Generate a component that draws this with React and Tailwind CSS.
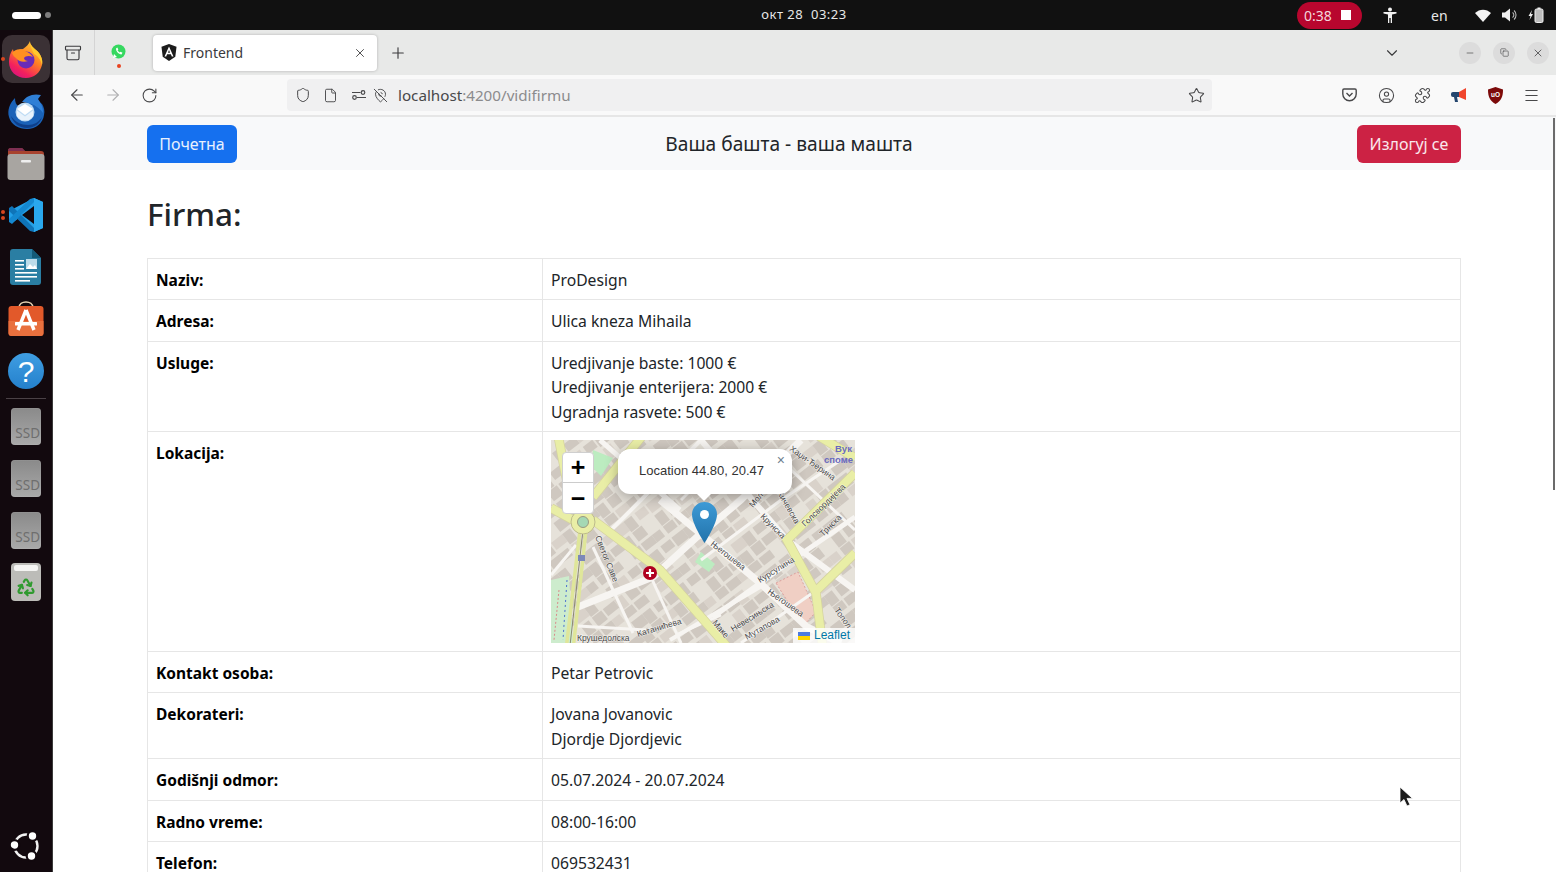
import { ArrowLeft, ArrowRight, RotateCw, Shield, File, Star, Plus, Minus, X, ChevronDown, Menu, Puzzle, CircleUser, MapPinOff, Archive, Copy, Recycle } from 'lucide-react'

const Firefox = () => (
    <svg width="36" height="37" viewBox="0 0 36 37">
        <defs>
            <linearGradient id="ffa" x1="0.85" y1="0" x2="0.25" y2="1">
                <stop offset="0" stopColor="#ffd83a" />
                <stop offset="0.45" stopColor="#ff7f24" />
                <stop offset="0.8" stopColor="#f3205e" />
                <stop offset="1" stopColor="#d8157e" />
            </linearGradient>
        </defs>
        <path d="M22 0c0 4 3 6 6 9 5 4 7 10 6 15-2 8-8 13-16 13C8 37 1 30 1 21c0-5 1-9 4-13 0 2 1 3 2 4 2-3 5-4 8-4 3-2 6-5 7-8z" fill="url(#ffa)" />
        <path d="M22 0c0 4 3 6 6 9 5 4 7 10 6 15-1-5-4-9-8-11-2-4-4-8-4-13z" fill="#ffc92e" />
        <circle cx="18" cy="19" r="8.500" fill="#6a2bb8" />
        <path d="M4 12c3-4 9-5 13-2 3 1 6 3 8 6-4-2-8-1-9 1 0 2 2 3 4 3-5 2-10 0-12-3-2-1-3-3-4-5z" fill="#ff8f22" />
    </svg>
)

const Thunderbird = () => (
    <svg width="38" height="38" viewBox="0 0 38 38">
        <path d="M8 6c-5 5-8 12-6 19 2 8 10 12 18 12 9 0 16-6 17-14 1-4 0-8-2-11l-4-3c-6-1-14 1-19 6-3-2-4-5-4-9z" fill="#1a62b8" />
        <path d="M15 10c4-6 11-9 19-7l-3 4 2 3c2 3 3 7 3 11-4-6-12-11-21-11z" fill="#2f7fd6" />
        <path d="M4 24c4 6 10 9 17 9 6 0 11-3 14-8-2 7-8 11-15 11-8 0-14-5-16-12z" fill="#0e3f8a" />
        <circle cx="18" cy="20" r="9.500" fill="#bfdcf4" />
        <path d="M10 17l8-5 8 5-8 6z" fill="#ffffff" />
        <path d="M10 18.500l8 6 8-6v6l-4 3.500h-8l-4-3.500z" fill="#e8f2fb" />
    </svg>
)

const Folder = () => (
    <svg width="38" height="36" viewBox="0 0 38 36">
        <path d="M1 6a3 3 0 013-3h11l3 3h16a3 3 0 013 3v10H1z" fill="#a8432f" />
        <path d="M1 6a3 3 0 013-3h11l3 3H1z" fill="#7e2f52" />
        <rect x="0.500" y="9" width="37" height="26" rx="3" fill="#a8a5a1" />
        <rect x="14" y="15" width="10" height="2.500" rx="1" fill="#efefef" />
    </svg>
)

const VSCode = () => (
    <svg width="36" height="36" viewBox="0 0 36 36">
        <path d="M26 1l9 4v26l-9 4-15-14-7 5-3-2v-10z" fill="#23a0e8" />
        <path d="M1 11l3-2 22 22v4l-4-1L1 14z" fill="#0f74b8" />
        <path d="M26 9v18L14 18z" fill="#12090e" />
        <path d="M1 25l3 2 22-22V1l-4 1L1 22z" fill="#1488d0" />
        <path d="M26 1l9 4v26l-9 4z" fill="#2aa8ee" />
    </svg>
)

const Writer = () => (
    <svg width="32" height="38" viewBox="0 0 32 38">
        <path d="M3 1h19l9 9v24a3 3 0 01-3 3H3a3 3 0 01-3-3V4a3 3 0 013-3z" fill="#2a7ea3" />
        <path d="M22 1l9 9h-9z" fill="#135a78" />
        <rect x="5" y="12" width="9" height="1.600" fill="#fff" />
        <rect x="5" y="16" width="9" height="1.600" fill="#fff" />
        <rect x="5" y="20" width="9" height="1.600" fill="#fff" />
        <rect x="16" y="11" width="11" height="10" fill="#bcdcea" />
        <path d="M16 21l4-5 3 3 2-2 2 4z" fill="#fff" />
        <rect x="5" y="24" width="22" height="1.600" fill="#fff" />
        <rect x="5" y="28" width="22" height="1.600" fill="#fff" />
        <rect x="5" y="32" width="15" height="1.600" fill="#fff" />
    </svg>
)

const AppCenter = () => (
    <svg width="36" height="36" viewBox="0 0 36 36">
        <path d="M11 7c0-8 14-8 14 0" fill="none" stroke="#e6d4b4" strokeWidth="1.600" />
        <rect x="0.500" y="5" width="35" height="30" rx="3" fill="#e2592a" />
        <path d="M0.500 20h35v12a3 3 0 01-3 3h-29a3 3 0 01-3-3z" fill="#e9703e" />
        <path d="M18 9L10 29M18 9l8 20" stroke="#fff" strokeWidth="3.400" fill="none" />
        <rect x="7" y="21" width="22" height="3.400" rx="0.500" fill="#fff" />
    </svg>
)

const Ssd = () => (
    <div className="relative w-[30px] h-[37px] rounded-[4px] bg-gradient-to-b from-[#8a8a8a] to-[#a9a9a9] shadow-[inset_0_0_1px_rgba(255,255,255,0.5)]">
        <span className="absolute right-[1px] bottom-[4px] text-[13.500px] leading-none text-[#6e6e6e] font-['Noto_Sans',sans-serif]">SSD</span>
    </div>
)

const Trash = () => (
    <div className="relative w-[30px] h-[38px] rounded-[4px] bg-[#bcbcb8] flex items-end justify-center pb-[4px]">
        <div className="absolute left-[3px] right-[3px] top-[2px] h-[6px] bg-[#f4f4f2] rounded-[2px]" />
        <Recycle size={20} strokeWidth={2.600} className="text-[#2f9a2f]" />
    </div>
)

const UbuntuLogo = () => (
    <svg width="32" height="32" viewBox="0 0 32 32">
        <circle cx="16" cy="16" r="11.500" fill="none" stroke="#f2f2f2" strokeWidth="2.400" />
        <g fill="#fff" stroke="#12090e" strokeWidth="2.200">
            <circle cx="22.500" cy="6" r="4.800" />
            <circle cx="4.500" cy="15" r="4.800" />
            <circle cx="21.500" cy="26" r="4.800" />
        </g>
    </svg>
)

const DockItem = ({ children, active, dots = 0 }) => (
    <div className="relative h-[52px] w-full flex items-center justify-center">
        {active && <div className="absolute left-[2px] top-[2px] w-[48px] h-[48px] rounded-[10px] bg-[#3b3135]" />}
        {dots > 0 && (
            <div className="absolute left-[1px] top-1/2 -translate-y-1/2 flex flex-col gap-[2px]">
                {Array.from({ length: dots }).map((_, i) => (
                    <span key={i} className="block w-[4px] h-[4px] rounded-full bg-[#d8461f]" />
                ))}
            </div>
        )}
        <div className="relative">{children}</div>
    </div>
)

const Dock = () => (
    <aside className="w-[53px] shrink-0 bg-[#12090e] border-r border-[#3a3a3a] flex flex-col pt-[3px] pb-[10px]">
        <DockItem active dots={1}><Firefox /></DockItem>
        <DockItem><Thunderbird /></DockItem>
        <DockItem><Folder /></DockItem>
        <DockItem dots={2}><VSCode /></DockItem>
        <DockItem><Writer /></DockItem>
        <DockItem><AppCenter /></DockItem>
        <DockItem>
            <div className="w-[36px] h-[36px] rounded-full bg-gradient-to-b from-[#3f9ee2] to-[#2480cc] flex items-center justify-center text-white text-[30px] font-['Liberation_Sans',sans-serif]">?</div>
        </DockItem>
        <div className="h-[3px] flex items-center px-[6px]"><div className="h-px w-full bg-[#4a4146]" /></div>
        <DockItem><Ssd /></DockItem>
        <DockItem><Ssd /></DockItem>
        <DockItem><Ssd /></DockItem>
        <DockItem><Trash /></DockItem>
        <div className="mt-auto flex justify-center"><UbuntuLogo /></div>
    </aside>
)

const TopBar = () => (
    <header className="h-[30px] shrink-0 bg-[#111111] flex items-center text-[#e8e8e8] font-['Noto_Sans',sans-serif]">
        <div className="w-[311px] pl-[12px] flex items-center gap-[4px]">
            <span className="block w-[29px] h-[7px] rounded-full bg-white" />
            <span className="block w-[6px] h-[6px] rounded-full bg-[#7c7c7c]" />
        </div>
        <div className="flex-1 flex justify-center text-[13px] tracking-[0.500px] -mt-[1px]">окт 28&nbsp; 03:23</div>
        <div className="flex items-center pr-[12px]">
            <div className="w-[65px] h-[27px] rounded-full bg-[#b8062e] flex items-center pl-[7px] text-[14px] text-[#f4d6dc]">
                0:38
                <span className="block w-[10px] h-[10px] bg-white ml-[9px]" />
            </div>
            <svg className="ml-[21px]" width="14" height="16" viewBox="0 0 14 16" fill="#f0f0f0">
                <circle cx="7" cy="2.400" r="2" />
                <path d="M0.500 5h13v1.600L9 7.600V16H7.700v-5H6.300v5H5V7.600L.5 6.600z" />
            </svg>
            <span className="ml-[34px] text-[14px] w-[18px]">en</span>
            <svg className="ml-[26px]" width="16" height="13" viewBox="0 0 16 13" fill="#f4f4f4"><path d="M0 4c4.500-4.500 11.500-4.500 16 0l-8 9z" /></svg>
            <svg className="ml-[11px]" width="16" height="14" viewBox="0 0 16 14" fill="none">
                <path d="M0 4.500h3L8 0.500v13l-5-4H0z" fill="#f0f0f0" />
                <path d="M10.500 4.500a3 3 0 010 5M12 2.500a6 6 0 010 9" stroke="#b8b8b8" strokeWidth="1.100" />
            </svg>
            <svg className="ml-[10px]" width="16" height="16" viewBox="0 0 16 16" fill="none">
                <path d="M4 3L0.500 9h2l-1 4L5 7H3z" fill="#f0f0f0" />
                <rect x="7" y="2" width="8" height="13.500" rx="1.500" stroke="#f0f0f0" strokeWidth="1" fill="#bdbdbd" />
                <rect x="9.500" y="0.500" width="3" height="1.500" fill="#f0f0f0" />
            </svg>
        </div>
    </header>
)

const WindowButton = ({ children }) => (
    <div className="w-[22px] h-[22px] rounded-full bg-[#dcdcdc] flex items-center justify-center">{children}</div>
)

const TabStrip = () => (
    <div className="h-[45px] shrink-0 bg-[#e8e9e8] flex items-center text-[#3a3a3c] font-['Noto_Sans',sans-serif]">
        <div className="w-[42px] h-full flex items-center justify-center border-r border-[#d4d4d4] pr-[2px]">
            <Archive size={18} strokeWidth={1.500} />
        </div>
        <div className="relative w-[58px] h-full flex items-center justify-center">
            <svg width="15" height="15" viewBox="0 0 15 15" className="-mt-[3px] ml-[-12px]">
                <circle cx="7.500" cy="7.500" r="7" fill="#36d860" />
                <path d="M2 14l1-4 3 3zM5 4.500c0 3 2.500 5.500 5.500 6l1-1.800-2-1-1 .8-2-2 .8-1-1-2z" fill="#fff" />
            </svg>
            <span className="absolute left-[22px] top-[34px] w-[4px] h-[4px] rounded-full bg-[#e8431f]" />
        </div>
        <div className="w-[224px] h-[36px] bg-white rounded-[4px] shadow-[0_0_3px_rgba(0,0,0,0.25)] flex items-center pl-[8px] pr-[10px]">
            <svg width="16" height="17" viewBox="0 0 16 17">
                <path d="M8 0L0.500 2.700l1.200 10L8 17l6.300-4.300 1.200-10z" fill="#1c1c1c" />
                <path d="M8 2.500l-4.500 10h1.700l.9-2.300h3.800l.9 2.300h1.700zM7 8.800L8 6l1 2.800z" fill="#fff" />
            </svg>
            <span className="ml-[6px] text-[14px] flex-1">Frontend</span>
            <X size={14} strokeWidth={1.500} />
        </div>
        <Plus size={18} strokeWidth={1.500} className="ml-[12px]" />
        <div className="flex-1" />
        <ChevronDown size={18} strokeWidth={1.500} className="mr-[58px]" />
        <div className="flex items-center gap-[12px] pr-[7px]">
            <WindowButton><Minus size={10} strokeWidth={1.500} /></WindowButton>
            <WindowButton><Copy size={9} strokeWidth={1.500} /></WindowButton>
            <WindowButton><X size={12} strokeWidth={1.500} /></WindowButton>
        </div>
    </div>
)

const ToolCell = ({ children }) => (
    <div className="w-[36.400px] flex items-center justify-center">{children}</div>
)

const NavBar = () => (
    <div className="h-[42px] shrink-0 bg-[#f9f9f9] border-b-2 border-[#e6e6e6] flex items-center text-[#48484a] font-['Noto_Sans',sans-serif]">
        <div className="w-[234px] pl-[15px] flex items-center gap-[18px]">
            <ArrowLeft size={18} strokeWidth={1.500} />
            <ArrowRight size={18} strokeWidth={1.500} className="text-[#b0b0b2]" />
            <RotateCw size={17} strokeWidth={1.500} className="ml-[1px]" />
        </div>
        <div className="w-[925px] h-[32px] rounded-[4px] bg-[#f0f0f1] flex items-center pl-[8px] pr-[7px]">
            <Shield size={16} strokeWidth={1.500} />
            <File size={15} strokeWidth={1.500} className="ml-[12px]" />
            <svg className="ml-[14px]" width="14" height="10" viewBox="0 0 14 10" fill="none" stroke="currentColor" strokeWidth="1.200">
                <circle cx="2.500" cy="7.500" r="1.800" />
                <circle cx="11" cy="2.500" r="1.800" />
                <path d="M0 2.500h8.500M5 7.500h9" />
            </svg>
            <MapPinOff size={15} strokeWidth={1.500} className="ml-[7px]" />
            <span className="ml-[10px] text-[15.200px]">localhost<span className="text-[#8b8b8d]">:4200/vidifirmu</span></span>
            <Star size={17} strokeWidth={1.500} className="ml-auto" />
        </div>
        <div className="flex-1 flex items-center justify-end pr-[6px]">
            <ToolCell>
                <svg width="15" height="14" viewBox="0 0 15 14" fill="none" stroke="currentColor" strokeWidth="1.400">
                    <path d="M2 1h11a1.200 1.200 0 011.200 1.200V6a6.700 6.700 0 01-13.400 0V2.200A1.200 1.200 0 012 1z" />
                    <path d="M4.500 5l3 3 3-3" />
                </svg>
            </ToolCell>
            <ToolCell><CircleUser size={17} strokeWidth={1.500} /></ToolCell>
            <ToolCell><Puzzle size={17} strokeWidth={1.500} /></ToolCell>
            <ToolCell>
                <svg width="17" height="16" viewBox="0 0 17 16">
                    <path d="M8 5l7-4v12L8 10z" fill="#f0452c" />
                    <path d="M2 5h6v5H2a2 2 0 01-2-2V7a2 2 0 012-2z" fill="#24466e" />
                    <path d="M3 10h3l1 5H4z" fill="#24466e" />
                </svg>
            </ToolCell>
            <ToolCell>
                <svg width="15" height="17" viewBox="0 0 15 17">
                    <path d="M7.500 0L0 2.500c0 7 1.500 11 7.500 14.500C13.500 13.500 15 9.500 15 2.500z" fill="#7c0a0a" />
                    <text x="7.500" y="10" fontSize="6.500" fill="#fff" textAnchor="middle" fontFamily="Liberation Sans" fontWeight="700">uO</text>
                </svg>
            </ToolCell>
            <ToolCell><Menu size={17} strokeWidth={1.500} /></ToolCell>
        </div>
    </div>
)

// building blocks of the map, a rough rotated grid
const blocks = []
for (let i = 0; i < 40; i++) {
    for (let j = 0; j < 26; j++) {
        if ((i * 7 + j * 3) % 9 === 0) continue
        blocks.push({ x: -180 + i * 14, y: -60 + j * 14, w: 10 + ((i + j) % 3) * 2, h: 9 + ((i * j) % 3) * 2 })
    }
}

const whiteRoads = [
    { d: 'M27 167L102 137L146 97L190 60L250 0', w: 7 },
    { d: 'M109 60L209 143L256 187L290 203', w: 7 },
    { d: 'M49 0L129 70', w: 5 },
    { d: 'M150 0L236 100L304 150', w: 6 },
    { d: 'M162 177L237 123L304 77', w: 5 },
    { d: 'M119 200L209 147', w: 4 },
    { d: 'M60 90L130 20L150 0', w: 4 },
    { d: 'M0 135L25 105', w: 3 },
    { d: 'M100 137L130 203', w: 3 },
    { d: 'M42 107L82 193', w: 3 },
    { d: 'M27 186L95 190', w: 3 },
    { d: 'M150 120L190 90L230 60L290 20', w: 3 },
    { d: 'M190 203L280 140', w: 3 },
    { d: 'M130 60L160 30', w: 3 },
    { d: 'M240 30L304 90', w: 3 },
    { d: 'M125 195L170 175', w: 3 },
]

const labels = [
    { t: 'Светог Саве', x: 44, y: 97, r: 68 },
    { t: 'Његошева', x: 159, y: 105, r: 38 },
    { t: 'Курсулина', x: 209, y: 143, r: -32 },
    { t: 'Крунска', x: 209, y: 77, r: 45 },
    { t: 'Голсвордијева', x: 254, y: 87, r: -44 },
    { t: 'Катанићева', x: 87, y: 197, r: -17 },
    { t: 'Невесињска', x: 182, y: 192, r: -32 },
    { t: 'Мутапова', x: 196, y: 200, r: -30 },
    { t: 'Његошева', x: 216, y: 153, r: 35 },
    { t: 'Крушедолска', x: 26, y: 201, r: 0 },
    { t: 'Хаџи-Ђерина', x: 238, y: 10, r: 35 },
    { t: 'Кичевска', x: 226, y: 53, r: 60 },
    { t: 'Молерова', x: 202, y: 68, r: -50 },
    { t: 'Трнска', x: 272, y: 97, r: -45 },
    { t: 'Маке', x: 161, y: 183, r: 50 },
    { t: 'Топол', x: 283, y: 170, r: 55 },
]

const MapDrawing = () => (
    <svg width="304" height="203" viewBox="0 0 304 203" className="block">
        <rect width="304" height="203" fill="#e6e2da" />
        <g transform="rotate(-38 150 100)">
            {blocks.map((b, i) => (
                <rect key={i} x={b.x} y={b.y} width={b.w} height={b.h} fill={i % 5 === 0 ? '#d9d2ca' : '#cfc8c0'} />
            ))}
        </g>
        <path d="M225 143l22-11 18 40-13 14z" fill="#f0cfc4" stroke="#d98a8a" strokeDasharray="2 2" strokeWidth="0.700" />
        <path d="M150 112l14 12-6 8-14-10zM42 10l20 8-12 18-10-10z" fill="#bcecc0" />
        <path d="M0 140l18 -4 4 67H0z" fill="#cdeccd" />
        <path d="M8 150L3 200" fill="none" stroke="#d98a8a" strokeWidth="1" strokeDasharray="2 2" />
        <path d="M16 140L12 200" fill="none" stroke="#4a6fd0" strokeWidth="1" strokeDasharray="2 3" />
        <g fill="none" stroke="#f7f5f2">
            {whiteRoads.map(r => <path key={r.d} d={r.d} strokeWidth={r.w} />)}
        </g>
        <g fill="none" stroke="#d5d3a0" strokeWidth="9.500">
            <path d="M42 80L109 130L179 210M42 57L92 -5M0 68L22 80M7 -5L22 73M304 33L236 100L265 153L272 210M304 113L266 150M266 -5L304 18" />
        </g>
        <g fill="none" stroke="#e9eea6" strokeWidth="8">
            <path d="M42 80L109 130L179 210M42 57L92 -5M0 68L22 80M7 -5L22 73M304 33L236 100L265 153L272 210M304 113L266 150M266 -5L304 18" />
        </g>
        <path d="M29 90L15 210M35 90L22 210" fill="none" stroke="#dfe69a" strokeWidth="3.500" />
        <path d="M32 90L18.500 210" fill="none" stroke="#8a8a70" strokeWidth="1" />
        <circle cx="32" cy="82" r="12" fill="#e9eea6" stroke="#bdbb8c" />
        <circle cx="32" cy="82" r="5.500" fill="#a4d8b4" stroke="#9a9a80" />
        <rect x="27" y="115" width="7" height="6" fill="#7c88b8" />
        <g fontFamily="Liberation Sans" fontSize="8.500" fill="#4a4a4a" stroke="#ffffff" strokeOpacity="0.600" strokeWidth="1.200" style={{ paintOrder: 'stroke' }}>
            {labels.map(l => (
                <text key={l.t + l.x} x={l.x} y={l.y} transform={`rotate(${l.r} ${l.x} ${l.y})`}>{l.t}</text>
            ))}
        </g>
        <g fontFamily="Liberation Sans" fontSize="9.500" fontWeight="700" fill="#6a6ac0">
            <text x="284" y="12">Вук</text>
            <text x="273" y="23">споме</text>
        </g>
        <circle cx="99" cy="133" r="7" fill="#b00020" />
        <path d="M99 129v8M95 133h8" stroke="#fff" strokeWidth="2.200" />
    </svg>
)

const LeafletMap = () => (
    <div className="relative w-[304px] h-[203px] -mt-px mb-px overflow-hidden font-['Liberation_Sans',sans-serif]">
        <MapDrawing />
        <div className="absolute left-[11px] top-[12px] w-[32px] h-[62px] bg-white rounded-[4px] border border-[#cfcfcf] flex flex-col text-black">
            <div className="h-[30px] flex items-center justify-center border-b border-[#cccccc] text-[25px] font-bold leading-none">+</div>
            <div className="flex-1 flex items-center justify-center text-[25px] font-bold leading-none">−</div>
        </div>
        <div className="absolute left-[67px] top-[9px] w-[174px] h-[45px] bg-white rounded-[12px] shadow-[0_3px_14px_rgba(0,0,0,0.3)] flex items-center pl-[21px] text-[13px] text-[#333]">
            Location 44.80, 20.47
            <span className="absolute right-[7px] top-[4px] text-[14px] leading-none text-[#6f7f8f]">×</span>
        </div>
        <div className="absolute left-[146px] top-[54px] w-0 h-0 border-l-[7px] border-r-[7px] border-t-[7px] border-l-transparent border-r-transparent border-t-white" />
        <svg className="absolute left-[141px] top-[62px]" width="25" height="41" viewBox="0 0 25 41">
            <defs>
                <linearGradient id="pin" x1="0" y1="0" x2="0" y2="1">
                    <stop offset="0" stopColor="#3d9ad6" />
                    <stop offset="1" stopColor="#2273ab" />
                </linearGradient>
            </defs>
            <path d="M12.500 0C5.500 0 0 5.500 0 12.500 0 22 12.500 41 12.500 41S25 22 25 12.500C25 5.500 19.500 0 12.500 0z" fill="url(#pin)" />
            <circle cx="12.500" cy="12.500" r="4.500" fill="#fff" />
        </svg>
        <div className="absolute right-0 bottom-0 h-[15px] w-[62px] bg-white/80 flex items-center pl-[5px] text-[12px] text-[#0078a8]">
            <svg width="12" height="8" viewBox="0 0 12 8" className="mr-[4px]">
                <rect width="12" height="4" fill="#4c7be1" />
                <rect y="4" width="12" height="4" fill="#ffd500" />
            </svg>
            Leaflet
        </div>
    </div>
)

const Row = ({ label, children }) => (
    <tr>
        <th className="border border-[#e6e6e6] px-2 pt-[9px] pb-[7px] text-left align-top font-bold text-[15.500px] text-black w-[395px]">{label}</th>
        <td className="border border-[#e6e6e6] px-2 pt-[9px] pb-[7px] align-top">{children}</td>
    </tr>
)

const Page = () => (
    <div className="flex-1 min-h-0 overflow-hidden bg-white text-[#212529] font-['Noto_Sans',sans-serif]">
        <div className="h-[53px] bg-[#f8f9fa] flex items-center justify-between pl-[94px] pr-[95px]">
            <button className="h-[38px] w-[90px] rounded-[6px] bg-[#1570ef] text-white/90 text-[16px]">Почетна</button>
            <div className="text-[19.200px] pr-[16px] pt-px">Ваша башта - ваша машта</div>
            <button className="h-[38px] w-[104px] rounded-[6px] bg-[#cc2244] text-white/90 text-[16px]">Излогуј се</button>
        </div>
        <div className="pl-[94px] pr-[95px] pt-[25px]">
            <h2 className="text-[31.400px] leading-[38px] font-medium mb-[25px]">Firma:</h2>
            <table className="w-full border-collapse text-[15.700px] leading-[24.400px]">
                <tbody>
                    <Row label="Naziv:">ProDesign</Row>
                    <Row label="Adresa:">Ulica kneza Mihaila</Row>
                    <Row label="Usluge:">
                        <div>Uredjivanje baste: 1000 €</div>
                        <div>Uredjivanje enterijera: 2000 €</div>
                        <div>Ugradnja rasvete: 500 €</div>
                    </Row>
                    <Row label="Lokacija:"><LeafletMap /></Row>
                    <Row label="Kontakt osoba:">Petar Petrovic</Row>
                    <Row label="Dekorateri:">
                        <div>Jovana Jovanovic</div>
                        <div>Djordje Djordjevic</div>
                    </Row>
                    <Row label="Godišnji odmor:">05.07.2024 - 20.07.2024</Row>
                    <Row label="Radno vreme:">08:00-16:00</Row>
                    <Row label="Telefon:">069532431</Row>
                </tbody>
            </table>
        </div>
    </div>
)

const App = () => (
    <div className="relative h-[872px] w-[1556px] overflow-hidden flex flex-col bg-[#111111]">
        <TopBar />
        <div className="flex-1 min-h-0 flex">
            <Dock />
            <main className="flex-1 min-w-0 flex flex-col">
                <TabStrip />
                <NavBar />
                <Page />
            </main>
        </div>
        {/* scrollbar + mouse pointer */}
        <div className="absolute left-[1553px] top-[118px] w-[2px] h-[372px] bg-[#6b6b6b]" />
        <svg className="absolute left-[1399px] top-[786px]" width="14" height="22" viewBox="0 0 14 22">
            <path d="M1 1v16l4-3.500 3 6.500 3-1.300-3-6.300h5.500z" fill="#1a1a1a" stroke="#fff" strokeWidth="0.800" />
        </svg>
    </div>
)

export default App
